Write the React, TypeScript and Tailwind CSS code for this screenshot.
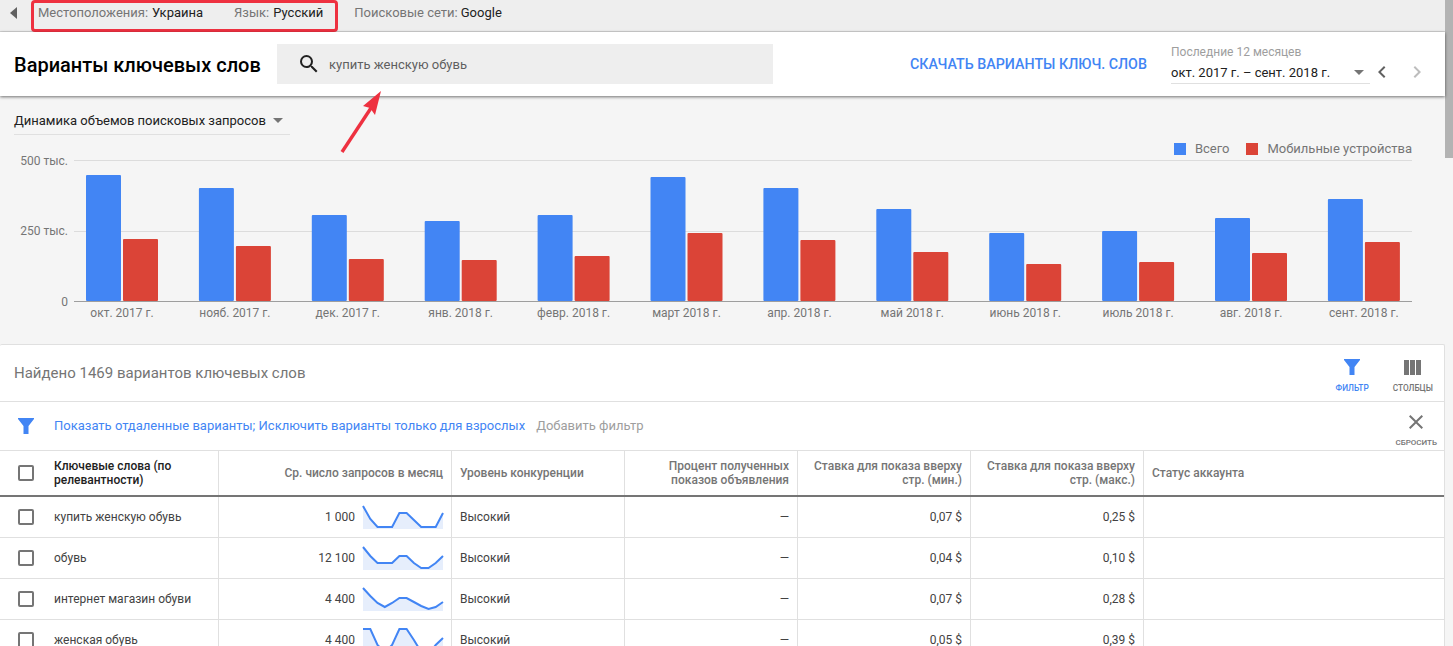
const months = [
  { label: "окт. 2017 г.", blue: 175, red: 239 },
  { label: "нояб. 2017 г.", blue: 188, red: 246 },
  { label: "дек. 2017 г.", blue: 215, red: 259 },
  { label: "янв. 2018 г.", blue: 221, red: 260 },
  { label: "февр. 2018 г.", blue: 215, red: 256 },
  { label: "март 2018 г.", blue: 177, red: 233 },
  { label: "апр. 2018 г.", blue: 188, red: 240 },
  { label: "май 2018 г.", blue: 209, red: 252 },
  { label: "июнь 2018 г.", blue: 233, red: 264 },
  { label: "июль 2018 г.", blue: 231, red: 262 },
  { label: "авг. 2018 г.", blue: 218, red: 253 },
  { label: "сент. 2018 г.", blue: 199, red: 242 },
];

const rows = [
  { kw: "купить женскую обувь", n: "1 000", min: "0,07 $", max: "0,25 $", pts: [1, 14, 22, 22, 22, 8, 8, 15, 22, 22, 22, 8] },
  { kw: "обувь", n: "12 100", min: "0,04 $", max: "0,10 $", pts: [1, 10, 17, 17, 17, 10, 10, 17, 22, 22, 17, 10] },
  { kw: "интернет магазин обуви", n: "4 400", min: "0,07 $", max: "0,28 $", pts: [1, 9, 16, 20, 16, 11, 11, 15, 19, 22, 20, 15] },
  { kw: "женская обувь", n: "4 400", min: "0,05 $", max: "0,39 $", pts: [1, 1, 17, 24, 17, 1, 1, 12, 24, 26, 17, 10] },
];

const Checkbox = () => <span className="block shrink-0 w-4 h-4 border-2 border-[#757575] rounded-[2px]" />;

const Triangle = ({ className }: { className: string }) => (
  <span className={`block w-0 h-0 border-x-[5px] border-x-transparent border-t-[5px] ${className}`} />
);

const Funnel = ({ className }: { className: string }) => (
  <svg viewBox="0 0 16 16" className={className}>
    <path d="M0 0h16v1L10.5 8v8h-5V8L0 1z" fill="#4285f4" />
  </svg>
);

const Spark = ({ pts }: { pts: number[] }) => {
  const line = pts.map((y, i) => `${((i * 80) / 11).toFixed(1)},${y}`).join(" ");
  return (
    <svg width="80" height="24" viewBox="0 0 80 24" className="block overflow-visible">
      <polygon points={`0,24 ${line} 80,24`} fill="#e6eefc" />
      <polyline points={line} fill="none" stroke="#4285f4" strokeWidth="2" />
    </svg>
  );
};

const Chart = () => (
  <svg width="1445" height="178" viewBox="0 150 1445 178" className="block -mt-[7px]" fontFamily="Roboto, sans-serif">
    <line x1="74" x2="1412" y1="160.5" y2="160.5" stroke="#dcdcdc" />
    <line x1="74" x2="1412" y1="231.5" y2="231.5" stroke="#dcdcdc" />
    <g fontSize="12" fill="#757575" textAnchor="end">
      <text x="68" y="165">500 тыс.</text>
      <text x="68" y="235">250 тыс.</text>
      <text x="68" y="306">0</text>
    </g>
    {months.map((m, i) => {
      const x = 86 + i * 112.9;
      return (
        <g key={m.label}>
          <rect x={x} y={m.blue} width="35" height={301 - m.blue} rx="1" fill="#4285f4" />
          <rect x={x + 37} y={m.red} width="35" height={301 - m.red} rx="1" fill="#db4437" />
          <text x={x + 36} y="317" fontSize="12" fill="#757575" textAnchor="middle">
            {m.label}
          </text>
        </g>
      );
    })}
    <line x1="74" x2="1412" y1="301.5" y2="301.5" stroke="#9e9e9e" />
  </svg>
);

const Action = ({ label, className, children }: { label: string; className: string; children: React.ReactNode }) => (
  <div className="flex flex-col items-center">
    <div className="h-[22px] flex items-end">{children}</div>
    <span className={`mt-[7px] text-[8.3px] leading-[12px] font-medium ${className}`}>{label}</span>
  </div>
);

const cell = "border-r border-[#e0e0e0] flex items-center";

export default function App() {
  return (
    <div className="relative flex w-[1453px] h-[646px] overflow-hidden bg-[#f5f5f5] font-['Roboto',sans-serif] text-[13px] text-[#212121]">
      <div className="w-[1445px] shrink-0">
        <div className="h-8 flex items-center pb-[5px] bg-[#eeeeee] border-b border-[#d6d6d6]">
          <span className="ml-[10px] w-0 h-0 border-y-[6px] border-y-transparent border-r-[7px] border-r-[#616161]" />
          <span className="ml-[21px] text-[#757575]">Местоположения:</span>
          <span className="ml-[4px]">Украина</span>
          <span className="ml-[31px] text-[#757575]">Язык:</span>
          <span className="ml-[4px]">Русский</span>
          <span className="ml-[31px] text-[#757575]">Поисковые сети:</span>
          <span className="ml-[3px]">Google</span>
        </div>

        <div className="relative z-10 h-16 flex items-center bg-white shadow-[0_1px_3px_rgba(0,0,0,0.55)]">
          <h1 className="ml-[14px] w-[263px] pt-[1px] text-[20px] font-medium text-black whitespace-nowrap">Варианты ключевых слов</h1>
          <div className="w-[496px] h-10 flex items-center bg-[#eeeeee]">
            <svg viewBox="0 0 24 24" className="ml-5 w-6 h-6">
              <path
                d="M15.5 14h-.79l-.28-.27A6.471 6.471 0 0 0 16 9.5 6.5 6.5 0 1 0 9.5 16c1.61 0 3.09-.59 4.23-1.57l.27.28v.79l5 4.99L20.49 19l-4.99-5zm-6 0C7.01 14 5 11.99 5 9.5S7.01 5 9.5 5 14 7.01 14 9.5 11.99 14 9.5 14z"
                fill="#212121"
              />
            </svg>
            <span className="ml-2 pt-[1px] text-[#5f5f5f]">купить женскую обувь</span>
          </div>
          <span className="ml-[137px] w-[261px] pt-[1px] text-[14.25px] font-medium text-[#4285f4] whitespace-nowrap">СКАЧАТЬ ВАРИАНТЫ КЛЮЧ. СЛОВ</span>
          <div className="w-[199px]">
            <div className="text-[12px] leading-[14px] text-[#9e9e9e]">Последние 12 месяцев</div>
            <div className="mt-[7px] h-[18px] flex items-center justify-between border-b border-[#e0e0e0] pb-[3px]">
              <span className="whitespace-nowrap">окт. 2017 г. – сент. 2018 г.</span>
              <Triangle className="mr-[6px] border-t-[#757575]" />
            </div>
          </div>
          <svg viewBox="0 0 24 24" className="w-6 h-6 mt-[15px]">
            <path d="M15.41 7.41L14 6l-6 6 6 6 1.41-1.41L10.83 12z" fill="#616161" />
          </svg>
          <svg viewBox="0 0 24 24" className="ml-[11px] w-6 h-6 mt-[15px]">
            <path d="M10 6L8.59 7.41 13.17 12l-4.58 4.59L10 18l6-6z" fill="#bdbdbd" />
          </svg>
        </div>

        <div className="h-[248px]">
          <div className="pt-[13px] pl-[14px]">
            <div className="w-[276px] h-[26px] flex items-center justify-between border-b border-[#e0e0e0] pb-[2px]">
              <span className="whitespace-nowrap">Динамика объемов поисковых запросов</span>
              <Triangle className="mr-[7px] border-t-[#757575]" />
            </div>
          </div>
          <div className="mt-[6px] h-4 pr-[33px] flex items-center justify-end text-[#757575]">
            <span className="w-3 h-3 bg-[#4285f4]" />
            <span className="ml-[9px]">Всего</span>
            <span className="ml-[17px] w-3 h-3 bg-[#db4437]" />
            <span className="ml-[9px]">Мобильные устройства</span>
          </div>
          <Chart />
        </div>

        <div className="bg-white border-t border-r border-[#e0e0e0] rounded-t-[2px]">
          <div className="h-[57px] flex items-center justify-between border-b border-[#e0e0e0] pl-[14px] pr-[11px]">
            <span className="text-[15px] text-[#757575] whitespace-nowrap">Найдено 1469 вариантов ключевых слов</span>
            <div className="flex gap-[24px]">
              <Action label="ФИЛЬТР" className="text-[#4285f4]">
                <Funnel className="w-4 h-4" />
              </Action>
              <Action label="СТОЛБЦЫ" className="text-[#757575]">
                <svg viewBox="0 0 17 15" className="w-[17px] h-[15px]">
                  <path d="M0 0h5v15H0zM6 0h5v15H6zM12 0h5v15h-5z" fill="#757575" />
                </svg>
              </Action>
            </div>
          </div>

          <div className="h-[49px] flex items-center border-b border-[#e0e0e0] pl-[18px] pr-[7px]">
            <Funnel className="w-4 h-4" />
            <span className="ml-[20px] text-[#4285f4] whitespace-nowrap">Показать отдаленные варианты; Исключить варианты только для взрослых</span>
            <span className="ml-[11px] text-[#9e9e9e] whitespace-nowrap">Добавить фильтр</span>
            <div className="ml-auto self-start pt-2 flex flex-col items-center">
              <svg viewBox="0 0 24 24" className="w-6 h-6">
                <path
                  d="M19 6.41L17.59 5 12 10.59 6.41 5 5 6.41 10.59 12 5 17.59 6.41 19 12 13.41 17.59 19 19 17.59 13.41 12z"
                  fill="#757575"
                />
              </svg>
              <span className="mt-[3px] text-[8px] leading-[12px] font-medium text-[#757575]">СБРОСИТЬ</span>
            </div>
          </div>

          <div className="grid grid-cols-[219px_233px_173px_173px_173px_173px_1fr] h-[46px] border-b-2 border-[#757575] text-[12px] leading-[14px] font-medium text-[#757575]">
            <div className={`${cell} pl-[18px]`}>
              <Checkbox />
              <span className="ml-[20px] text-[#212121]">Ключевые слова (по релевантности)</span>
            </div>
            <div className={`${cell} justify-end pr-2`}>Ср. число запросов в месяц</div>
            <div className={`${cell} pl-2`}>Уровень конкуренции</div>
            <div className={`${cell} justify-end text-right pr-2`}>Процент полученных показов объявления</div>
            <div className={`${cell} justify-end text-right pr-2`}>Ставка для показа вверху стр. (мин.)</div>
            <div className={`${cell} justify-end text-right pr-2`}>Ставка для показа вверху стр. (макс.)</div>
            <div className="flex items-center pl-2">Статус аккаунта</div>
          </div>

          {rows.map((r) => (
            <div key={r.kw} className="grid grid-cols-[219px_233px_173px_173px_173px_173px_1fr] h-[41px] border-b border-[#e0e0e0] text-[12px] text-[#424242]">
              <div className={`${cell} pl-[18px]`}>
                <Checkbox />
                <span className="ml-[20px] whitespace-nowrap">{r.kw}</span>
              </div>
              <div className={`${cell} justify-end pr-2`}>
                <span className="mr-2">{r.n}</span>
                <Spark pts={r.pts} />
              </div>
              <div className={`${cell} pl-2`}>Высокий</div>
              <div className={`${cell} justify-end pr-2`}>—</div>
              <div className={`${cell} justify-end pr-2`}>{r.min}</div>
              <div className={`${cell} justify-end pr-2`}>{r.max}</div>
              <div />
            </div>
          ))}
        </div>
      </div>

      <div className="w-2 shrink-0 bg-[#f5f5f5]">
        <div className="h-[158px] bg-[#b3b3b3]" />
      </div>

      <div className="absolute left-[31px] top-0 w-[307px] h-[32px] border-[3px] border-[#ee3140] rounded-[4px]" />
      <svg className="absolute left-[335px] top-[88px] z-20" width="52" height="70" viewBox="0 0 52 70">
        <line x1="7" y1="64" x2="36" y2="20" stroke="#ee3140" strokeWidth="3.4" />
        <polygon points="46,3 40,27 35,20 28,18" fill="#ee3140" />
      </svg>
    </div>
  );
}
